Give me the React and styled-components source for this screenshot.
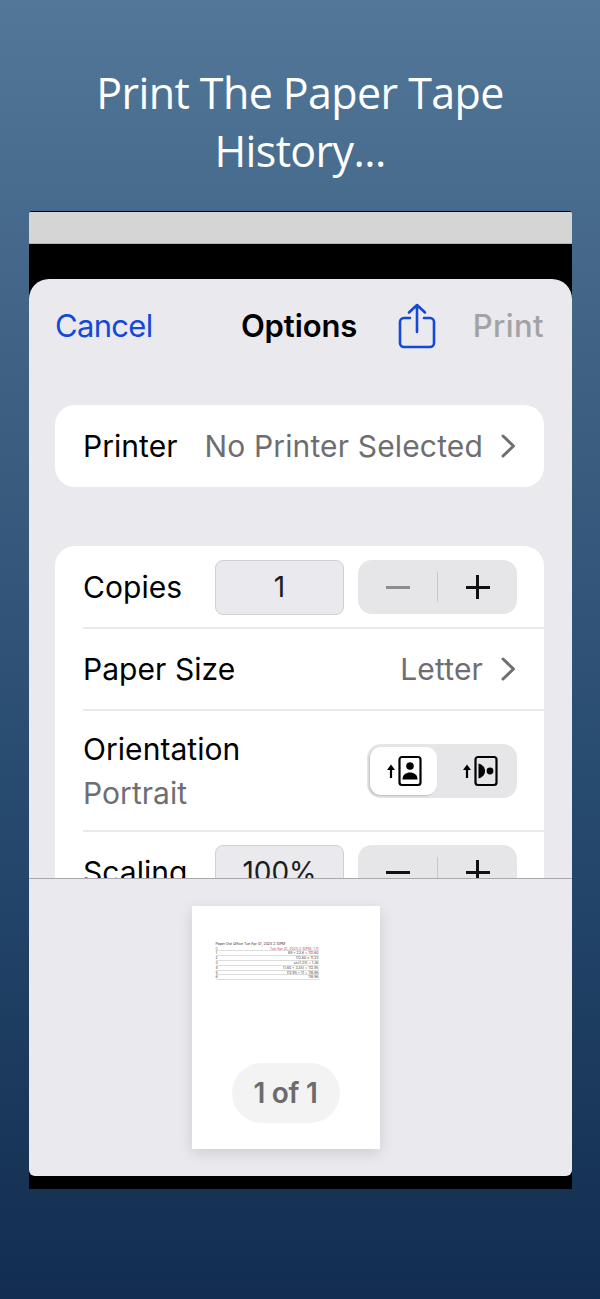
import React from 'react';
import styled, { createGlobalStyle } from 'styled-components';

const GlobalStyle = createGlobalStyle`
    html, body {
        margin: 0;
        padding: 0;
    }
    body {
        font-family: "Inter", "Liberation Sans", sans-serif;
    }
`;

const tapeRows = [
    ['0', 'Tue Apr 01, 2025 2:10PM: 1:11'],
    ['1', '89 + 23.6 = 112.60'],
    ['2', '112.60 × 11.25'],
    ['3', 'sin(1.25) = 1.36'],
    ['4', '(1.60 + 3.35) = 112.95'],
    ['5', '112.95 + 11 = 118.96'],
    ['6', '118.96'],
];

function Chevron() {
    return (
        <ChevronSvg viewBox="0 0 15 24" fill="none">
            <path d="M2 2 L12.5 12 L2 22" stroke="#6f6f72" strokeWidth="3" strokeLinecap="round" strokeLinejoin="round" />
        </ChevronSvg>
    );
}

function ShareIcon() {
    return (
        <svg width="38" height="46" viewBox="0 0 38 46" fill="none" stroke="#1449d8" strokeWidth="2.6" strokeLinecap="round" strokeLinejoin="round">
            <path d="M12 15 H6 a4 4 0 0 0 -4 4 V40 a4 4 0 0 0 4 4 H32 a4 4 0 0 0 4 -4 V19 a4 4 0 0 0 -4 -4 H26" />
            <path d="M19 29 V2 M11 9.5 L19 2 L27 9.5" />
        </svg>
    );
}

function PortraitIcon() {
    return (
        <svg width="38" height="32" viewBox="0 0 38 32" fill="none">
            <path d="M6 23 V13" stroke="#000" strokeWidth="2.2" />
            <path d="M2 15 L6 9.5 L10 15 Z" fill="#000" />
            <rect x="14.5" y="2" width="21" height="28" rx="2.5" stroke="#000" strokeWidth="2.2" />
            <circle cx="25" cy="11" r="3.8" fill="#000" />
            <path d="M17.5 24.5 C17.5 19.5 21 17.5 25 17.5 C29 17.5 32.5 19.5 32.5 24.5 Z" fill="#000" />
        </svg>
    );
}

function LandscapeIcon() {
    return (
        <svg width="38" height="32" viewBox="0 0 38 32" fill="none">
            <path d="M6 23 V13" stroke="#000" strokeWidth="2.2" />
            <path d="M2 15 L6 9.5 L10 15 Z" fill="#000" />
            <rect x="14.5" y="2" width="21" height="28" rx="2.5" stroke="#000" strokeWidth="2.2" />
            <circle cx="29" cy="16" r="3.4" fill="#000" />
            <path d="M17.5 8.5 C21.5 9.5 24 12.5 24 16 C24 19.5 21.5 22.5 17.5 23.5 Z" fill="#000" />
        </svg>
    );
}

function Stepper({ minusDark }) {
    return (
        <StepperBox>
            <StepGlyph $dark={minusDark}>
                <MinusBar $dark={minusDark} />
            </StepGlyph>
            <StepDivider />
            <StepGlyph $dark>
                <MinusBar $dark />
                <PlusBar />
            </StepGlyph>
        </StepperBox>
    );
}

function App() {
    return (
        <Page>
            <GlobalStyle />
            <Headline>Print The Paper Tape<br />History...</Headline>
            <Frame>
                <GreyBar />
                <Sheet>
                    <ScrollArea>
                        <NavBar>
                            <CancelLabel>Cancel</CancelLabel>
                            <NavTitle>Options</NavTitle>
                            <ShareSlot><ShareIcon /></ShareSlot>
                            <PrintLabel>Print</PrintLabel>
                        </NavBar>
                        <PrinterCard>
                            <Row>
                                <RowLabel>Printer</RowLabel>
                                <RowValue>No Printer Selected<Chevron /></RowValue>
                            </Row>
                        </PrinterCard>
                        <OptionsCard>
                            <Row>
                                <RowLabel>Copies</RowLabel>
                                <Controls>
                                    <ValueBox>1</ValueBox>
                                    <Stepper />
                                </Controls>
                            </Row>
                            <Row>
                                <RowLabel>Paper Size</RowLabel>
                                <RowValue>Letter<Chevron /></RowValue>
                            </Row>
                            <TallRow>
                                <div>
                                    <RowLabel>Orientation</RowLabel>
                                    <RowSubLabel>Portrait</RowSubLabel>
                                </div>
                                <Segmented>
                                    <ActiveSegment><PortraitIcon /></ActiveSegment>
                                    <IdleSegment><LandscapeIcon /></IdleSegment>
                                </Segmented>
                            </TallRow>
                            <Row>
                                <RowLabel>Scaling</RowLabel>
                                <Controls>
                                    <ValueBox>100%</ValueBox>
                                    <Stepper minusDark />
                                </Controls>
                            </Row>
                        </OptionsCard>
                    </ScrollArea>
                    <PreviewArea>
                        <Paper>
                            <TapeHeader>Paper Dot Office Tue Apr 01, 2025 2:10PM</TapeHeader>
                            {tapeRows.map(([num, text], i) => (
                                <TapeRow key={num} $red={i === 0}>
                                    <span>{num}</span>
                                    <span>{text}</span>
                                </TapeRow>
                            ))}
                            <PageBadge>1 of 1</PageBadge>
                        </Paper>
                    </PreviewArea>
                </Sheet>
            </Frame>
        </Page>
    );
}

const Page = styled.div`
    width: 600px;
    height: 1299px;
    overflow: hidden;
    box-sizing: border-box;
    padding-top: 64px;
    background: linear-gradient(180deg, #527798 0%, #3f6284 28%, #264a6e 62%, #122d4f 100%);
`;

const Headline = styled.h1`
    margin: 0 0 31px;
    height: 116px;
    text-align: center;
    font-family: "Open Sans", "Noto Sans", sans-serif;
    font-weight: 400;
    font-size: 43px;
    line-height: 58px;
    letter-spacing: -0.6px;
    color: #fff;
`;

const Frame = styled.div`
    width: 543px;
    height: 978px;
    margin-left: 29px;
    background: #000;
    box-sizing: border-box;
    padding-top: 1px;
    border-radius: 3px 3px 0 0;
    overflow: hidden;
`;

const GreyBar = styled.div`
    height: 31px;
    background: #d5d5d6;
    border-bottom: 1px solid #b5b5b5;
    margin-bottom: 35px;
`;

const Sheet = styled.div`
    height: 897px;
    background: #e9e9ee;
    border-radius: 20px 20px 6px 6px;
    overflow: hidden;
    display: flex;
    flex-direction: column;
`;

const ScrollArea = styled.div`
    height: 599px;
    flex: none;
    overflow: hidden;
    border-bottom: 1px solid #a9a9ad;
    box-sizing: content-box;
`;

const NavBar = styled.div`
    display: flex;
    align-items: center;
    height: 92px;
    padding: 0 28px 2px 27px;
    font-size: 31px;
`;

const CancelLabel = styled.span`
    color: #1449d8;
    width: 186px;
    margin-left: -1px;
    margin-right: 1px;
    letter-spacing: -0.7px;
`;

const NavTitle = styled.span`
    color: #000;
    font-weight: 600;
    width: 157px;
    margin-left: -1px;
    letter-spacing: -0.1px;
`;

const ShareSlot = styled.span`
    display: flex;
    width: 75px;
    margin-top: 2px;
`;

const PrintLabel = styled.span`
    color: #a3a3a6;
    font-weight: 500;
    letter-spacing: 0.4px;
`;

const PrinterCard = styled.div`
    margin: 32px 28px 0 26px;
    background: #fff;
    border-radius: 20px;
    overflow: hidden;
`;

const OptionsCard = styled.div`
    margin: 59px 28px 0 26px;
    padding-top: 1px;
    background: #fff;
    border-radius: 20px 20px 0 0;
`;

const Row = styled.div`
    display: flex;
    align-items: center;
    justify-content: space-between;
    height: 82px;
    margin-left: 28px;
    padding-right: 28px;
    box-sizing: border-box;
    border-bottom: 2px solid #e9e9ec;
    ${PrinterCard} & {
        border-bottom: none;
    }
`;

const TallRow = styled(Row)`
    height: 121px;
`;

const RowLabel = styled.div`
    font-size: 30px;
    line-height: 44px;
    letter-spacing: 0.05px;
    color: #000;
`;

const RowSubLabel = styled(RowLabel)`
    color: #6e6e72;
`;

const RowValue = styled.div`
    display: flex;
    align-items: center;
    gap: 18px;
    font-size: 30px;
    letter-spacing: 0.15px;
    color: #6e6e72;
`;

const ChevronSvg = styled.svg`
    width: 15px;
    height: 24px;
    margin-right: 0;
`;

const Controls = styled.div`
    display: flex;
    align-items: center;
    gap: 14px;
    margin-right: -1px;
`;

const ValueBox = styled.div`
    width: 129px;
    height: 55px;
    box-sizing: border-box;
    display: flex;
    align-items: center;
    justify-content: center;
    background: #e9e9ee;
    border: 1px solid #cfcfd4;
    border-radius: 8px;
    font-size: 28px;
    color: #1c1c1e;
`;

const StepperBox = styled.div`
    width: 159px;
    height: 54px;
    display: flex;
    align-items: center;
    background: #e6e6e9;
    border-radius: 14px;
`;

const StepGlyph = styled.div`
    position: relative;
    flex: 1;
    height: 24px;
`;

const MinusBar = styled.div`
    position: absolute;
    top: 11px;
    left: 50%;
    width: 24px;
    height: 2.6px;
    margin-left: -12px;
    background: ${p => (p.$dark ? '#111' : '#8d8d90')};
`;

const PlusBar = styled.div`
    position: absolute;
    top: 0;
    left: 50%;
    width: 2.6px;
    height: 24px;
    margin-left: -1.3px;
    background: #111;
`;

const StepDivider = styled.div`
    width: 1px;
    height: 30px;
    background: #c8c8ca;
`;

const Segmented = styled.div`
    display: flex;
    width: 150px;
    height: 54px;
    box-sizing: border-box;
    padding: 3px 0 3px 3px;
    margin-right: -1px;
    background: #e6e6e9;
    border-radius: 14px;
`;

const ActiveSegment = styled.div`
    width: 67px;
    display: flex;
    align-items: center;
    justify-content: center;
    border-radius: 11px;
    background: #fff;
    box-shadow: -1px 1px 2px rgba(0, 0, 0, 0.18);
`;

const IdleSegment = styled.div`
    flex: 1;
    display: flex;
    align-items: center;
    justify-content: center;
    padding-left: 6px;
`;

const PreviewArea = styled.div`
    flex: 1;
    display: flex;
    justify-content: center;
    padding-top: 27px;
    padding-right: 30px;
`;

const Paper = styled.div`
    position: relative;
    width: 188px;
    height: 243px;
    box-sizing: border-box;
    padding: 36px 61px 0 24px;
    background: #fff;
    box-shadow: 0 4px 14px rgba(0, 0, 0, 0.12);
    font-size: 3.5px;
    color: #333;
`;

const TapeHeader = styled.div`
    line-height: 4.6px;
    white-space: nowrap;
`;

const TapeRow = styled.div`
    display: flex;
    justify-content: space-between;
    height: 4.8px;
    box-sizing: border-box;
    line-height: 4.4px;
    white-space: nowrap;
    border-bottom: 0.5px solid #ddd;
    color: ${p => (p.$red ? '#e0405a' : '#444')};
`;

const PageBadge = styled.div`
    position: absolute;
    left: 40px;
    top: 157px;
    width: 108px;
    height: 60px;
    display: flex;
    align-items: center;
    justify-content: center;
    background: #f3f3f3;
    border-radius: 30px;
    font-size: 28px;
    font-weight: 600;
    color: #6b6b6d;
    letter-spacing: -0.3px;
`;

export default App;
